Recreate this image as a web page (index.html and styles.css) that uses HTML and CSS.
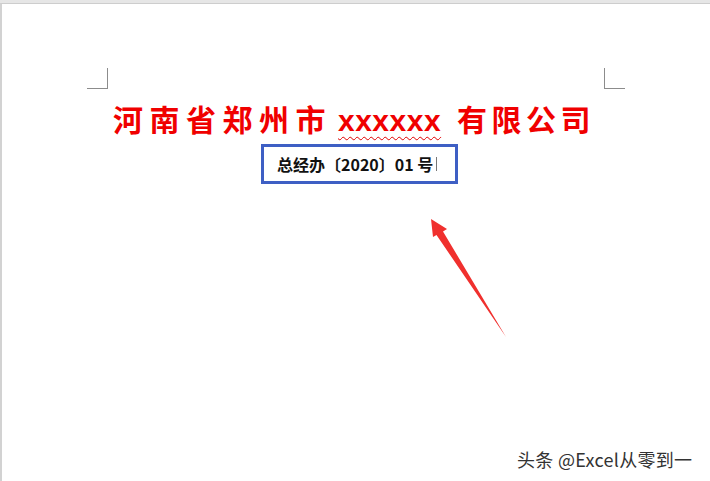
FILE: index.html
```html
<!DOCTYPE html>
<html lang="zh-CN">
<head>
<meta charset="UTF-8">
<meta name="viewport" content="width=device-width, initial-scale=1.0">
<title>河南省郑州市 xxxxxx 有限公司</title>
<link rel="stylesheet" href="styles.css">
</head>
<body>

<div class="window">
    <div class="page">
        <div class="corners">
            <div class="corner corner-left"></div>
            <div class="corner corner-right"></div>
        </div>

        <div class="title">
            <span class="title-cn">河南省郑州市</span>
            <span class="title-x">xxxxxx</span>
            <span class="title-cn title-end">有限公司</span>
        </div>

        <div class="doc-no">
            总经办〔2020〕01 号<span class="caret"></span>
        </div>
    </div>

    <!-- red arrow pointing at the document number -->
    <svg class="arrow" width="710" height="481" viewBox="0 0 710 481">
        <polygon points="431,219 447,229 443,231.5 506,337 436.5,235 433,237" fill="#f0302e" />
    </svg>

    <div class="watermark">头条 @Excel从零到一</div>
</div>

</body>
</html>
```

FILE: styles.css
```css
body {
    margin: 0;
    background-color: #fff;
    font-family: "Noto Sans CJK SC", "Noto Sans", sans-serif;
}
.window {
    position: relative;
    width: 710px;
    height: 481px;
    box-sizing: border-box;
    border-top: 3px solid #e6e6e6;
    overflow: hidden;
}
.page {
    height: 100%;
    box-sizing: border-box;
    border-top: 1px solid #cdcdcd;
    border-left: 2px solid #d2d2d2;
    background-color: #fff;
}
.corners {
    display: flex;
    justify-content: space-between;
    margin: 64px 85px 0 85px;
}
.corner {
    width: 20px;
    height: 20px;
    border-bottom: 1px solid #8c8c8c;
}
.corner-left {
    border-right: 1px solid #8c8c8c;
}
.corner-right {
    border-left: 1px solid #8c8c8c;
}
.title {
    display: flex;
    align-items: baseline;
    margin-top: 11px;
    padding-left: 111px;
    height: 36px;
    line-height: 36px;
    color: #f00000;
    font-size: 30px;
    font-weight: bold;
    white-space: nowrap;
}
.title-cn {
    letter-spacing: 6.5px;
}
.title-end {
    letter-spacing: 4.5px;
}
.title-x {
    font-family: "Liberation Sans", Arial, sans-serif;
    letter-spacing: 0.5px;
    margin: 0 14px 0 6px;
    padding-right: 2px;
    text-decoration: underline wavy #e00000;
    text-decoration-thickness: 1px;
    text-underline-offset: 5px;
}
.doc-no {
    display: flex;
    align-items: center;
    width: 197px;
    height: 40px;
    box-sizing: border-box;
    margin: 8px 0 0 259px;
    padding-left: 13px;
    border: 3px solid #3e5fc4;
    font-size: 16px;
    font-weight: bold;
    color: #111;
    white-space: nowrap;
}
.caret {
    display: inline-block;
    width: 0;
    height: 14px;
    margin-left: 3px;
    border-left: 1px solid #777;
}
.arrow {
    position: absolute;
    top: -3px;
    left: 0;
}
.watermark {
    position: absolute;
    left: 517px;
    top: 443px;
    font-size: 18px;
    color: #333;
    letter-spacing: 0.3px;
    text-shadow: 0 0 2px #fff, 1px 1px 0 #fff, -1px -1px 0 #fff;
}
```
